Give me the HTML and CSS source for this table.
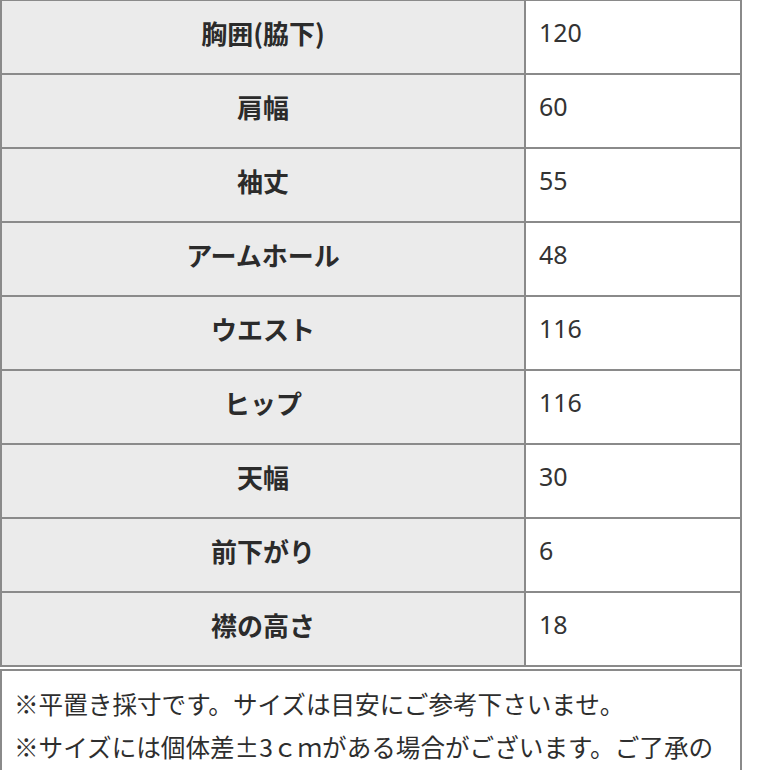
FILE: index.html
```html
<!DOCTYPE html>
<html lang="ja">
<head>
<meta charset="utf-8">
<link rel="stylesheet" href="styles.css">
</head>
<body>
<div class="sizes">
  <div class="label">胸囲(脇下)</div><div class="value">120</div>
  <div class="label">肩幅</div><div class="value">60</div>
  <div class="label">袖丈</div><div class="value">55</div>
  <div class="label">アームホール</div><div class="value">48</div>
  <div class="label">ウエスト</div><div class="value">116</div>
  <div class="label">ヒップ</div><div class="value">116</div>
  <div class="label">天幅</div><div class="value">30</div>
  <div class="label">前下がり</div><div class="value">6</div>
  <div class="label">襟の高さ</div><div class="value">18</div>
</div>
<div class="notes">
  <p>※平置き採寸です。サイズは目安にご参考下さいませ。</p>
  <p>※サイズには個体差±3ｃｍがある場合がございます。ご了承の上お買い求めくださいませ。</p>
</div>
</body>
</html>
```
FILE: styles.css
```css
html, body {
  margin: 0;
  padding: 0;
  background: #ffffff;
}
body {
  font-family: "Noto Sans CJK JP", "Noto Sans", sans-serif;
  color: #333333;
  width: 770px;
}
.sizes {
  display: grid;
  grid-template-columns: 524px 216px;
  width: 740px;
  border-left: 2px solid #8a8a8a;
  border-top: 1px solid #8a8a8a;
}
.label, .value {
  box-sizing: border-box;
  height: 74px;
  padding-bottom: 10px;
  border-right: 2px solid #8a8a8a;
  border-bottom: 2px solid #8a8a8a;
  display: flex;
  align-items: center;
}
.label {
  background: #ebebeb;
  justify-content: center;
  font-size: 26px;
  font-weight: 700;
  color: #2b2b2b;
}
.value {
  background: #ffffff;
  padding-left: 13px;
  font-family: "Noto Sans", "Noto Sans CJK JP", sans-serif;
  font-size: 25px;
  color: #333333;
}
.notes {
  margin-top: 2px;
  width: 704px;
  border: 2px solid #8a8a8a;
  padding: 11px 22px 0 12px;
  font-size: 24.6px;
  line-height: 43px;
  color: #2e2e2e;
}
.notes p {
  margin: 0;
}
```
